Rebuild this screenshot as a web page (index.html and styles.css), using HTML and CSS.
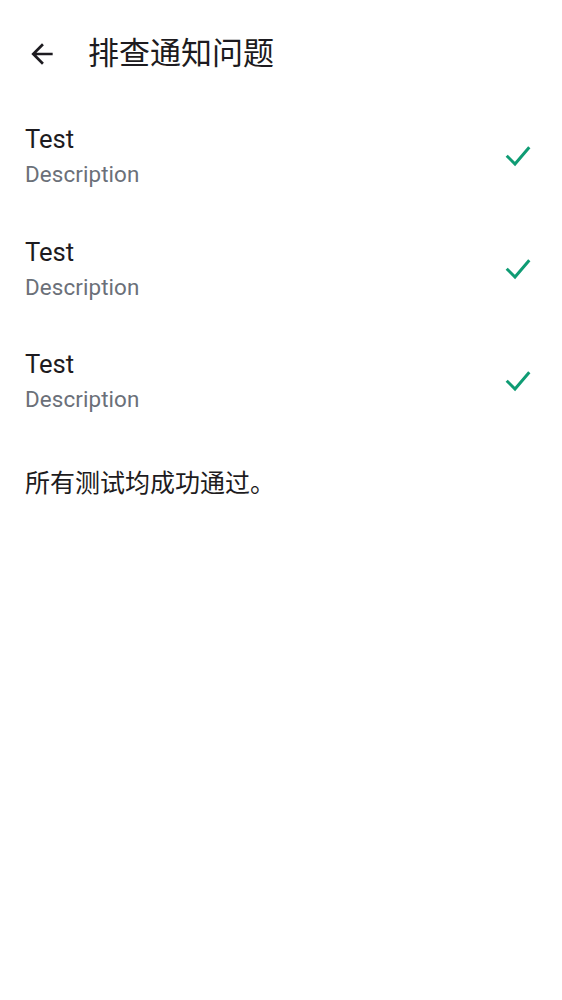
FILE: index.html
```html
<!DOCTYPE html>
<html lang="zh">
<head>
<meta charset="utf-8">
<link rel="stylesheet" href="styles.css">
</head>
<body>
<div class="app">
  <header class="bar">
    <span class="back">
      <svg width="32" height="32" viewBox="0 0 24 24"><path d="M20 11H7.83l5.59-5.59L12 4l-8 8 8 8 1.41-1.41L7.83 13H20v-2z" fill="#1d1b20"/></svg>
    </span>
    <h1 class="title">排查通知问题</h1>
  </header>
  <ul class="list">
    <li class="item">
      <div class="texts"><div class="head">Test</div><div class="desc">Description</div></div>
      <svg class="check" width="26" height="22" viewBox="0 0 26 22"><polyline points="1.7,10.7 10,19 24.3,2.3" fill="none" stroke="#0f9c74" stroke-width="3"/></svg>
    </li>
    <li class="item">
      <div class="texts"><div class="head">Test</div><div class="desc">Description</div></div>
      <svg class="check" width="26" height="22" viewBox="0 0 26 22"><polyline points="1.7,10.7 10,19 24.3,2.3" fill="none" stroke="#0f9c74" stroke-width="3"/></svg>
    </li>
    <li class="item">
      <div class="texts"><div class="head">Test</div><div class="desc">Description</div></div>
      <svg class="check" width="26" height="22" viewBox="0 0 26 22"><polyline points="1.7,10.7 10,19 24.3,2.3" fill="none" stroke="#0f9c74" stroke-width="3"/></svg>
    </li>
  </ul>
  <p class="result">所有测试均成功通过。</p>
</div>
</body>
</html>
```
FILE: styles.css
```css
html, body { margin: 0; padding: 0; background: #fff; }
body { font-family: Roboto, "Noto Sans CJK SC", sans-serif; color: #1d1b20; }
.app { width: 562px; }
.bar { height: 100px; display: flex; align-items: center; padding: 7px 0 0 26px; box-sizing: border-box; }
.back { width: 32px; height: 32px; display: flex; }
.title { margin: 0 0 0 30px; font-size: 31px; font-weight: 400; line-height: 40px; color: #1d1b20; }
.list { list-style: none; margin: 0; padding: 0; }
.item { height: 112.5px; display: flex; align-items: center; padding: 0 31px 0 25px; box-sizing: border-box; justify-content: space-between; }
.head { font-size: 25.6px; line-height: 36px; color: #1d1b20; }
.desc { font-size: 22.4px; line-height: 34px; color: #6b7079; letter-spacing: 0.1px; }
.check { display: block; }
.result { margin: 28px 0 0 25px; font-size: 25px; line-height: 36px; color: #1d1b20; }
```
